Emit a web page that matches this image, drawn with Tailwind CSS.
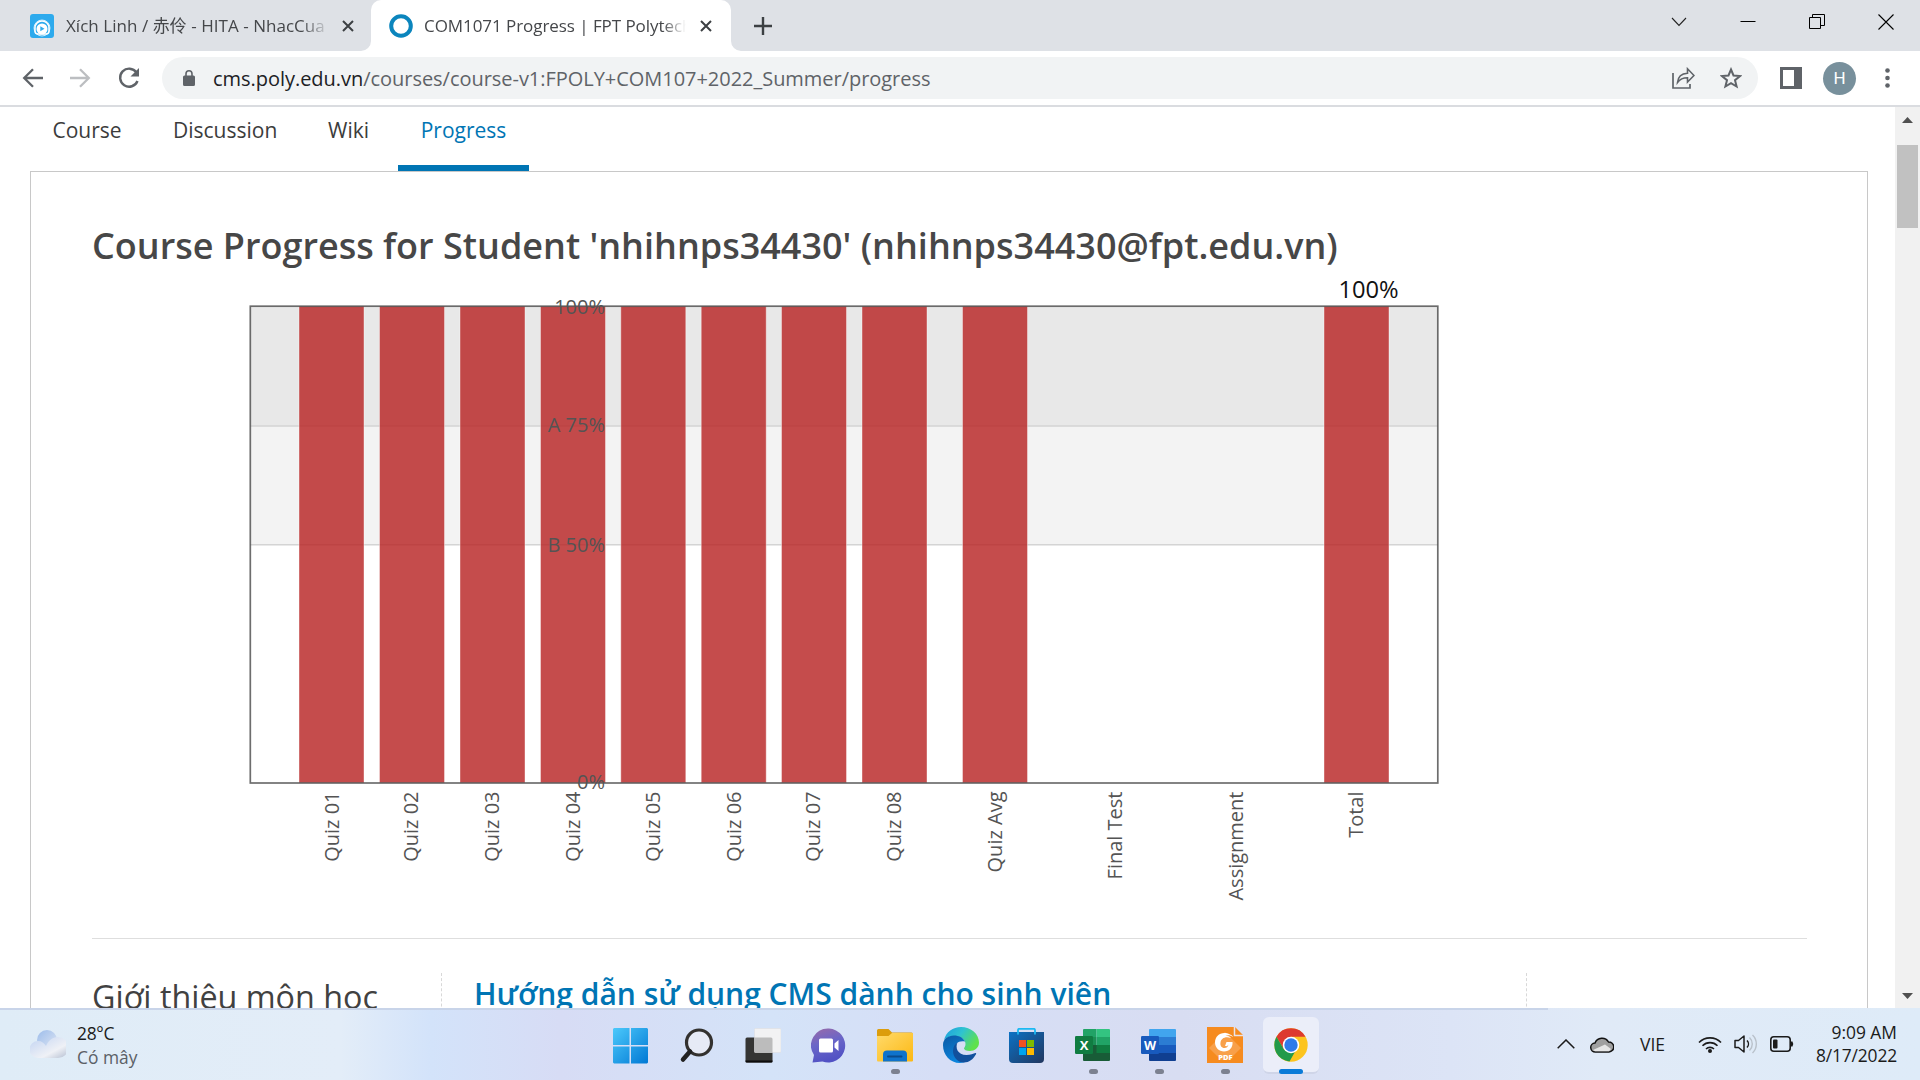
<!DOCTYPE html>
<html lang="vi">
<head>
<meta charset="utf-8">
<title>COM1071 Progress | FPT Polytechnic</title>
<script src="https://cdn.jsdelivr.net/npm/@tailwindcss/browser@4"></script>
</head>
<body class="w-[1920px] h-[1080px] overflow-hidden flex flex-col bg-white font-['Open_Sans','Noto_Sans_CJK_SC',sans-serif]">

<!-- Tab strip -->
<header class="h-[51px] shrink-0 bg-[#dee1e6] flex text-[17px] leading-[51px] text-[#45474a]">
  <div class="w-[371px] flex items-center pl-[30px]">
    <svg class="w-6 h-6 shrink-0" viewBox="0 0 24 24"><rect width="24" height="24" rx="3" fill="#2daaed"/><circle cx="12" cy="14" r="8" fill="none" stroke="#c9ecfc" stroke-width="1"/><path d="M5 14a7 7 0 0 1 14 0v3a3 3 0 0 1-3 3H8a3 3 0 0 1-3-3z" fill="none" stroke="#fff" stroke-width="1.5"/><circle cx="12" cy="15" r="5.5" fill="#fff"/><path d="M10.3 12.3v5l4.2-2.5z" fill="#2daaed"/></svg>
    <div class="ml-3 w-[264px] overflow-hidden whitespace-nowrap tracking-[0.04px] [mask-image:linear-gradient(to_right,black_89%,transparent)]">Xích Linh / 赤伶 - HITA - NhacCua</div>
    <svg class="w-3 h-3 ml-3" viewBox="0 0 12 12"><path d="M1 1l10 10M11 1L1 11" stroke="#3c4043" stroke-width="2"/></svg>
  </div>
  <div class="w-[360px] relative bg-white rounded-t-[10px] flex items-center pl-[18px]">
    <svg class="absolute -left-2.5 bottom-0 w-2.5 h-2.5" viewBox="0 0 10 10"><path d="M10 0v10H0A10 10 0 0 0 10 0" fill="#fff"/></svg>
    <svg class="absolute -right-2.5 bottom-0 w-2.5 h-2.5" viewBox="0 0 10 10"><path d="M0 0v10h10A10 10 0 0 1 0 0" fill="#fff"/></svg>
    <svg class="w-6 h-6 shrink-0" viewBox="0 0 24 24"><circle cx="12" cy="12" r="9.8" fill="none" stroke="#0b85bd" stroke-width="4"/></svg>
    <div class="ml-[11px] w-[262px] overflow-hidden whitespace-nowrap tracking-[-0.06px] [mask-image:linear-gradient(to_right,black_91%,transparent)]">COM1071 Progress | FPT Polytech</div>
    <svg class="w-3 h-3 ml-[14px]" viewBox="0 0 12 12"><path d="M1 1l10 10M11 1L1 11" stroke="#3c4043" stroke-width="2"/></svg>
  </div>
  <div class="flex-1 flex items-center pl-[23px]">
    <svg class="w-[18px] h-[18px]" viewBox="0 0 18 18"><path d="M9 0v18M0 9h18" stroke="#3c4043" stroke-width="2.4"/></svg>
  </div>
  <div class="flex pt-[14px] pr-[26px] gap-[53px]">
    <svg class="w-4 h-4" viewBox="0 0 16 16"><path d="M1 4l7 7.5L15 4" fill="none" stroke="#222" stroke-width="1.1"/></svg>
    <svg class="w-4 h-4" viewBox="0 0 16 16"><path d="M.5 7.5h15" stroke="#000"/></svg>
    <svg class="w-4 h-4" viewBox="0 0 16 16"><path d="M.5 3.5h11v11H.5zM3.500 3V.5h12v11h-3.500" fill="none" stroke="#000"/></svg>
    <svg class="w-4 h-4" viewBox="0 0 16 16"><path d="M.5.5l15 15M15.500.5l-15 15" stroke="#000" stroke-width="1.1"/></svg>
  </div>
</header>

<!-- Toolbar -->
<div class="h-14 shrink-0 border-b-2 border-[#dadce0] flex items-center pl-[22px] pr-[28px]">
  <svg class="w-[21px] h-5" viewBox="0 0 21 20"><path d="M21 10H3M11 1.200L2.200 10l8.800 8.800" fill="none" stroke="#5f6368" stroke-width="2.300"/></svg>
  <svg class="w-[21px] h-5 ml-[27px]" viewBox="0 0 21 20"><path d="M0 10h18M10 1.200L18.800 10 10 18.800" fill="none" stroke="#bcbec1" stroke-width="2.300"/></svg>
  <svg class="w-[22px] h-[22px] ml-[27px]" viewBox="0 0 22 22"><path d="M18.500 5.500A9 9 0 1 0 19.500 14" fill="none" stroke="#5f6368" stroke-width="2.400"/><path d="M21 1v8.500h-8.500z" fill="#5f6368"/></svg>
  <div class="ml-[22px] w-[1596px] h-[42px] rounded-full bg-[#f1f3f4] flex items-center pl-[21px] pr-4">
    <svg class="w-3 h-4" viewBox="0 0 12 16"><path d="M1.500 5.500h9A1.500 1.500 0 0 1 12 7v7.500a1.500 1.500 0 0 1-1.500 1.500h-9A1.500 1.500 0 0 1 0 14.500V7a1.500 1.500 0 0 1 1.500-1.500z" fill="#5f6368"/><path d="M3 6V3.800a3 3 0 0 1 6 0V6" fill="none" stroke="#5f6368" stroke-width="1.600"/></svg>
    <div class="ml-[18px] pt-0.5 text-[20px] tracking-[-0.035px] text-[#5f6368] whitespace-nowrap"><span class="text-[#202124]">cms.poly.edu.vn</span>/courses/course-v1:FPOLY+COM107+2022_Summer/progress</div>
    <svg class="w-[23px] h-[22px] ml-auto" viewBox="0 0 23 22"><path d="M1 6v15h17v-4" fill="none" stroke="#5f6368" stroke-width="1.700"/><path d="M5.500 15.500c.5-6 4-9 10-9.300V1.800L22 8.500l-6.500 6.600v-4.300c-4.500 0-7.500 1.300-10 4.700z" fill="none" stroke="#5f6368" stroke-width="1.600"/></svg>
    <svg class="w-[22px] h-[22px] ml-[25px]" viewBox="0 0 22 22"><path d="M11 2.500l2.500 6 6.500.500-5 4.200 1.600 6.300L11 16.100l-5.600 3.400L7 13.200 2 9l6.500-.500z" fill="none" stroke="#5f6368" stroke-width="2"/></svg>
  </div>
  <svg class="w-[22px] h-[22px] ml-[22px]" viewBox="0 0 22 22"><path d="M0 0h22v22H0zM3 3v16h11V3z" fill="#5f6368" fill-rule="evenodd"/></svg>
  <div class="ml-[21px] w-[33px] h-[33px] rounded-full bg-[#78909c] text-white text-[17px] leading-[33px] text-center font-[Roboto]">H</div>
  <svg class="w-[5px] h-5 ml-auto mr-0.5" viewBox="0 0 5 20"><circle cx="2.500" cy="2.500" r="2.300" fill="#5f6368"/><circle cx="2.500" cy="10" r="2.300" fill="#5f6368"/><circle cx="2.500" cy="17.500" r="2.300" fill="#5f6368"/></svg>
</div>

<!-- Viewport -->
<div class="h-[901px] shrink-0 flex">
  <main class="flex-1 overflow-hidden flex flex-col pl-[30px] pr-[27px]">
    <nav class="h-16 shrink-0 flex text-[21px] leading-[30px] text-[#3c3c3c] pt-2">
      <a class="pl-[22.500px] w-[143px]">Course</a>
      <a class="w-[155px]">Discussion</a>
      <a class="w-[70px]">Wiki</a>
      <a class="w-[131px] text-center text-[#0075b4] border-b-6 border-[#0075b4]">Progress</a>
    </nav>
    <section class="flex-1 border border-b-0 border-[#c8c8c8] px-[61px]">
      <h1 class="pt-[49px] pb-px text-[36px] leading-[50px] font-semibold text-[#474747] whitespace-nowrap">Course Progress for Student 'nhihnps34430' (nhihnps34430@fpt.edu.vn)</h1>
      <svg class="block w-[1500px] h-[666px]" viewBox="92 272 1500 666" font-size="20" fill="#545454">
        <rect x="250" y="306" width="1188" height="120" fill="#e8e8e8"/>
        <rect x="250" y="426" width="1188" height="119" fill="#f3f3f3"/>
        <path d="M250 426h1188M250 544.700h1188" stroke="#d4d4d4" stroke-width="1.500"/>
        <g fill="#b82525" fill-opacity=".82" stroke="#fff" stroke-opacity=".4" stroke-width="1">
          <rect x="299" y="306" width="65" height="477"/>
          <rect x="379.500" y="306" width="65" height="477"/>
          <rect x="460" y="306" width="65" height="477"/>
          <rect x="540.500" y="306" width="65" height="477"/>
          <rect x="620.800" y="306" width="65" height="477"/>
          <rect x="701.200" y="306" width="65" height="477"/>
          <rect x="781.500" y="306" width="65" height="477"/>
          <rect x="862" y="306" width="65" height="477"/>
          <rect x="962.500" y="306" width="65" height="477"/>
          <rect x="1324" y="306" width="65" height="477"/>
        </g>
        <rect x="250.300" y="306.200" width="1187.500" height="476.800" fill="none" stroke="#545454" stroke-opacity=".85" stroke-width="1.700"/>
        <g text-anchor="end">
          <text x="605" y="314">100%</text>
          <text x="605" y="432">A 75%</text>
          <text x="605" y="552">B 50%</text>
          <text x="605" y="788.500">0%</text>
        </g>
        <text x="1368.500" y="297.700" font-size="23.700" fill="#111" text-anchor="middle">100%</text>
        <g text-anchor="end">
          <text transform="translate(339 791.500) rotate(-90)">Quiz 01</text>
          <text transform="translate(418 791.500) rotate(-90)">Quiz 02</text>
          <text transform="translate(499 791.500) rotate(-90)">Quiz 03</text>
          <text transform="translate(580 791.500) rotate(-90)">Quiz 04</text>
          <text transform="translate(660 791.500) rotate(-90)">Quiz 05</text>
          <text transform="translate(741 791.500) rotate(-90)">Quiz 06</text>
          <text transform="translate(820 791.500) rotate(-90)">Quiz 07</text>
          <text transform="translate(901 791.500) rotate(-90)">Quiz 08</text>
          <text transform="translate(1002 791.500) rotate(-90)">Quiz Avg</text>
          <text transform="translate(1122 791.500) rotate(-90)">Final Test</text>
          <text transform="translate(1243 791.500) rotate(-90)">Assignment</text>
          <text transform="translate(1363 791.500) rotate(-90)">Total</text>
        </g>
      </svg>
      <div class="w-[1715px] border-t border-[#dedede] pt-[34px] flex h-[150px] whitespace-nowrap">
        <h2 class="w-[350px] shrink-0 border-r border-dashed border-[#d8d8d8] text-[32.300px] leading-[46px] text-[#414141]">Giới thiệu môn học</h2>
        <h3 class="w-[1085px] shrink-0 border-r border-dashed border-[#d8d8d8] pl-8 text-[30px] leading-[42px] font-semibold text-[#0075b4]">Hướng dẫn sử dụng CMS dành cho sinh viên</h3>
      </div>
    </section>
  </main>
  <div class="w-[25px] bg-[#f1f1f1] flex flex-col items-center pt-[10px] pb-[9px]">
    <svg class="w-[11px] h-1.5" viewBox="0 0 11 6"><path d="M0 6l5.500-6L11 6z" fill="#505050"/></svg>
    <div class="w-[21px] h-[83px] bg-[#c1c1c1] mt-[22px]"></div>
    <svg class="w-[11px] h-1.5 mt-auto" viewBox="0 0 11 6"><path d="M0 0l5.500 6L11 0z" fill="#505050"/></svg>
  </div>
</div>

<!-- Taskbar -->
<footer class="relative h-[72px] shrink-0 flex items-center text-[#1b1b1b] bg-[linear-gradient(90deg,#dfecf7_0px,#e3edf8_340px,#d3e3fa_430px,#d7dcf5_560px,#d4e3f8_770px,#d6def6_940px,#d8ddf2_1180px,#dce4f6_1450px,#e0eaf7_1600px,#deebf8_1920px)]">
  <div class="absolute left-0 top-0 w-[1548px] h-0.5 bg-[#c8d4e9]"></div>
  <div class="w-[598px] pl-[30px] flex items-center gap-[11px] text-[17.400px] leading-6">
    <svg class="w-9 h-7" viewBox="0 0 36 28"><defs><linearGradient id="cl" x1="0" y1="0" x2="1" y2="1"><stop offset="0" stop-color="#9dbdeb"/><stop offset="1" stop-color="#dfe6f3"/></linearGradient><linearGradient id="cf" x1="0" y1="0" x2="1" y2="1"><stop offset="0" stop-color="#c1d3f2"/><stop offset=".65" stop-color="#eff1f6"/><stop offset="1" stop-color="#b3bdd0"/></linearGradient></defs><circle cx="17" cy="10" r="10" fill="url(#cl)"/><path d="M8 11c4 0 6 2 8 5 2-5 6-9 12-9a10 10 0 0 1 0 21H8a8 8 0 0 1 0-17z" fill="url(#cf)"/></svg>
    <div class="pt-0.5"><div class="tracking-[-0.3px]">28°C</div><div class="text-[#5b6066]">Có mây</div></div>
  </div>
  <div class="flex h-full">
    <div class="w-[66px] flex flex-col items-center pt-5"><svg class="w-9 h-9" viewBox="0 0 36 36"><defs><linearGradient id="wn" x1="0" y1="0" x2="1" y2="1" ><stop offset="0" stop-color="#4cc9fb"/><stop offset="1" stop-color="#0078d4"/></linearGradient></defs><path d="M1 0H16.500v17H0V1zM18 0H34L35 1V17h-17zM0 18.500H16.500V35.500H1L0 34.500zM18 18.500h17v16l-1 1h-16z" fill="url(#wn)"/></svg></div>
    <div class="w-[66px] flex flex-col items-center pt-5"><svg class="w-9 h-9" viewBox="0 0 36 36"><circle cx="20" cy="14.500" r="12.500" fill="#e6eaf6" stroke="#33312f" stroke-width="3.200"/><path d="M11 23.500L4 31.500" stroke="#222" stroke-width="4.500" stroke-linecap="round"/></svg></div>
    <div class="w-[66px] flex flex-col items-center pt-5"><svg class="w-9 h-9" viewBox="0 0 36 36"><rect x=".5" y="9.500" width="27" height="25" rx="1.500" fill="#353533"/><path d="M.5 32.500h27v1a1 1 0 0 1-1 1h-25a1 1 0 0 1-1-1z" fill="#0c0c0c"/><rect x="9.500" y=".5" width="26.500" height="24" rx="1" fill="#f2f2f3" stroke="#ddd" stroke-width=".5"/><path d="M9.500 9.500h16.500a1.500 1.500 0 0 1 1.500 1.500v13.500h-18z" fill="#bcbcbc"/></svg></div>
    <div class="w-[66px] flex flex-col items-center pt-5"><svg class="w-9 h-9" viewBox="0 0 36 36"><defs><linearGradient id="ch" x1="0" y1="0" x2=".3" y2="1"><stop offset="0" stop-color="#9a6aa8"/><stop offset=".5" stop-color="#6a66c8"/><stop offset="1" stop-color="#5252c4"/></linearGradient></defs><path d="M18 .5a17 17 0 1 1-6.500 33L1.500 34.500 3 27A17 17 0 0 1 18 .5z" fill="url(#ch)"/><rect x="8" y="10.500" width="14" height="14" rx="1.500" fill="#fff"/><path d="M23.500 15.500l4-3.500v11l-4-3.500z" fill="#fff"/></svg></div>
    <div class="w-[66px] flex flex-col items-center pt-5"><svg class="w-9 h-9" viewBox="0 0 36 36"><defs><linearGradient id="fo" x1="0" y1="0" x2="1" y2="1"><stop offset="0" stop-color="#ffda6b"/><stop offset="1" stop-color="#fcb813"/></linearGradient></defs><path d="M0 2.500q0-1.500 1.500-1.500H11.500L15 4.500h19.500q1.500 0 1.500 1.500v8H0z" fill="#dc9d0c"/><path d="M0 8h11.500l3.500-3h21v27.500q0 1-1 1H1q-1 0-1-1z" fill="url(#fo)"/><path d="M6 33.500V26.500q0-4 4-4h16q4 0 4 4v7z" fill="#0f73cc"/><rect x="10" y="27.500" width="15.500" height="2" rx="1" fill="#0a4b8c"/></svg><i class="w-[9px] h-[5px] mt-[5px] rounded-full bg-[#7c8190]"></i></div>
    <div class="w-[66px] flex flex-col items-center pt-[19px]"><svg class="w-9 h-9" viewBox="0 0 36 36"><defs><linearGradient id="e1" x1="0" y1="0" x2="1" y2=".5"><stop offset="0" stop-color="#1c9de0"/><stop offset=".5" stop-color="#2fc3d0"/><stop offset="1" stop-color="#5fe14b"/></linearGradient><linearGradient id="e2" x1="0" y1="0" x2=".4" y2="1"><stop offset="0" stop-color="#0c59a4"/><stop offset="1" stop-color="#0b84dc"/></linearGradient></defs><path d="M1 13C3 5 10 0 18 0c10 0 18 7 18 15.500 0 5.500-4.500 8.500-9 8.500-4 0-6-1.500-6-2.500 0-1 1.500-1.800 1.500-4.500 0-4.500-5-8-11-8-4 0-8 1.500-10.500 4z" fill="url(#e1)"/><path d="M0 18C0 12 5 8.500 11 8.500c5 0 9 2 11 6-7-1-10 2-10 7 0 7 6 12.500 12 12.500-2 1.300-4.500 2-7 2C7 36 0 28 0 18z" fill="url(#e2)"/><path d="M14.500 15.500c-2.500 5 0 12.500 9 12.500 4 0 7-1.300 9-2 .8 0 .8.700.5 1.300C30 32.500 26 35.500 21 35.500c-7 0-11-6-11-11.500 0-3.500 1.500-7 4.500-8.500z" fill="#12509c"/></svg></div>
    <div class="w-[66px] flex flex-col items-center pt-5"><svg class="w-9 h-9" viewBox="0 0 36 36"><defs><linearGradient id="st" x1="0" y1="0" x2="1" y2="1"><stop offset="0" stop-color="#0b72c5"/><stop offset="1" stop-color="#22375f"/></linearGradient></defs><path d="M0 4h35v27q0 4-4 4h-27q-4 0-4-4z" fill="url(#st)"/><path d="M9 6.500V2Q9 .8 10.200.8H24.800Q26 .8 26 2V6.500" fill="none" stroke="#1cb9f2" stroke-width="1.800"/><path d="M10 12h7v7h-7z" fill="#f25022"/><path d="M18 12h7v7h-7z" fill="#7fba00"/><path d="M10 20h7v7h-7z" fill="#00a4ef"/><path d="M18 20h7v7h-7z" fill="#ffb900"/></svg></div>
    <div class="w-[66px] flex flex-col items-center pt-5"><svg class="w-9 h-9" viewBox="0 0 36 36"><path d="M8 2q0-1 1-1H21.500v8H8z" fill="#21a366"/><path d="M21.500 1h12.500q1 0 1 1v7H21.500z" fill="#33c481"/><path d="M8 9H21.500v8H8z" fill="#1a8f54"/><path d="M21.500 9h13.500v8H21.500z" fill="#21a366"/><path d="M8 17h27v8h-27z" fill="#107c41"/><path d="M8 17H21.500v8H8zM8 25h27v7q0 1-1 1h-25q-1 0-1-1z" fill="#185c37"/><rect x="0" y="8" width="18" height="18" rx="1.200" fill="#107c41"/><text x="9" y="21.800" text-anchor="middle" font-size="13" font-weight="700" fill="#fff">X</text></svg><i class="w-[9px] h-[5px] mt-[5px] rounded-full bg-[#7c8190]"></i></div>
    <div class="w-[66px] flex flex-col items-center pt-5"><svg class="w-9 h-9" viewBox="0 0 36 36"><path d="M8 2q0-1 1-1h25q1 0 1 1v7h-27z" fill="#41a5ee"/><path d="M8 9h27v8h-27z" fill="#2b7cd3"/><path d="M8 17h27v8h-27z" fill="#185abd"/><path d="M8 25h27v7q0 1-1 1h-25q-1 0-1-1z" fill="#103f91"/><rect x="0" y="8" width="18" height="18" rx="1.200" fill="#185abd"/><text x="9" y="21.500" text-anchor="middle" font-size="12.500" font-weight="700" fill="#fff">W</text></svg><i class="w-[9px] h-[5px] mt-[5px] rounded-full bg-[#7c8190]"></i></div>
    <div class="w-[66px] flex flex-col items-center pt-[19px]"><svg class="w-9 h-9" viewBox="0 0 36 36"><path d="M0 0h27l9 9v27H0z" fill="#f68b1f"/><path d="M18 5l16 16-12 12H14L2 21z" fill="#f8a04a"/><path d="M28 0l8 8h-8z" fill="#f68b1f"/><path d="M27.500 0v8.500H36" fill="none" stroke="#e9e4ea" stroke-width="1.500"/><path d="M23 7.500C15 3.500 8 8.500 8 15.500c0 5 4 9 9 9 5.500 0 9-4 8.500-9.500h-6l-1.500 4c2.500.5 3-.5 3.500-1.500-.5 2.500-2 3.500-4 3.500-3 0-4.500-2.500-4-5.500.7-4 4.500-6.500 10.500-4.500-1-1.500-3-2.300-5.500-2.300 2-.8 5-.8 7.500 1.300-.5-1.200-1.500-2-3-2.500z" fill="#fff"/><text x="18.500" y="33" text-anchor="middle" font-size="7.500" font-weight="800" fill="#fff">PDF</text></svg><i class="w-[9px] h-[5px] mt-1.5 rounded-full bg-[#7c8190]"></i></div>
    <div class="w-[66px] flex flex-col items-center pt-[9px]">
      <div class="w-14 h-[57px] rounded-md bg-[#ebeef9] border-b-2 border-[#cfd5e8] flex flex-col items-center pt-[11px]"><svg class="w-[34px] h-[34px] shrink-0" viewBox="0 0 34 34"><circle cx="17" cy="17" r="16.700" fill="#fcc41e"/><path d="M2.500 8.700A16.700 16.700 0 0 1 31.500 8.700H17L9.800 21.200z" fill="#dd3a2f"/><path d="M2.500 8.700L9.800 21.200 17 25.300l4-1.500-5.500 9.800A16.700 16.700 0 0 1 2.500 8.700z" fill="#229a4a"/><circle cx="17" cy="17" r="8.300" fill="#fff"/><circle cx="17" cy="17" r="6.700" fill="#2f7bea"/></svg><i class="w-6 h-[5px] mt-[7px] shrink-0 rounded-full bg-[#0a7bd8]"></i></div>
    </div>
  </div>
  <div class="flex-1 flex items-center pl-[233px] pr-[23px]">
    <svg class="w-[18px] h-[10px]" viewBox="0 0 18 10"><path d="M.7 9.300L9 1l8.300 8.300" fill="none" stroke="#1b1b1b" stroke-width="1.500"/></svg>
    <svg class="w-6 h-[17px] ml-[15px]" viewBox="0 0 24 17"><path d="M5.500 16a4.500 4.500 0 0 1-.500-9A7.500 7.500 0 0 1 18.500 6a5 5 0 0 1 .500 10z" fill="#a0a0a0" stroke="#111" stroke-width="1.500"/><path d="M3 14l12-5.500L21 13l-2 2.200H5z" fill="#e6e6e6"/></svg>
    <span class="ml-[26px] w-[33px] text-[17.500px] leading-6">VIE</span>
    <svg class="w-6 h-[17px] ml-[25px]" viewBox="0 0 24 17"><g fill="none" stroke="#1b1b1b" stroke-width="1.600"><path d="M1 6.500a15.500 15.500 0 0 1 22 0M4.500 9.800a10.500 10.500 0 0 1 15 0M8 13a5.700 5.700 0 0 1 8 0"/></g><circle cx="12" cy="15" r="2" fill="#1b1b1b"/></svg>
    <svg class="w-6 h-5 ml-3" viewBox="0 0 24 20"><path d="M1 6.500h3.500L10 2v16l-5.500-4.500H1z" fill="none" stroke="#1b1b1b" stroke-width="1.500" stroke-linejoin="round"/><path d="M13 6.500a5 5 0 0 1 0 7" fill="none" stroke="#1b1b1b" stroke-width="1.500"/><path d="M15.500 3.500a9 9 0 0 1 0 13M18.500 1a12.500 12.500 0 0 1 0 18" fill="none" stroke="#b9c1ca" stroke-width="1.400"/></svg>
    <svg class="w-6 h-4 ml-3" viewBox="0 0 24 16"><rect x=".8" y=".8" width="19.400" height="14.400" rx="3" fill="none" stroke="#1b1b1b" stroke-width="1.600"/><rect x="3" y="3.500" width="4.500" height="9" rx="1" fill="#1b1b1b"/><path d="M21 5.500h1.500q1.500 2.500 0 5H21z" fill="#1b1b1b"/></svg>
    <div class="ml-auto text-right text-[17.400px] leading-[23px]"><div>9:09 AM</div><div class="tracking-[-0.150px]">8/17/2022</div></div>
  </div>
</footer>
</body>
</html>
